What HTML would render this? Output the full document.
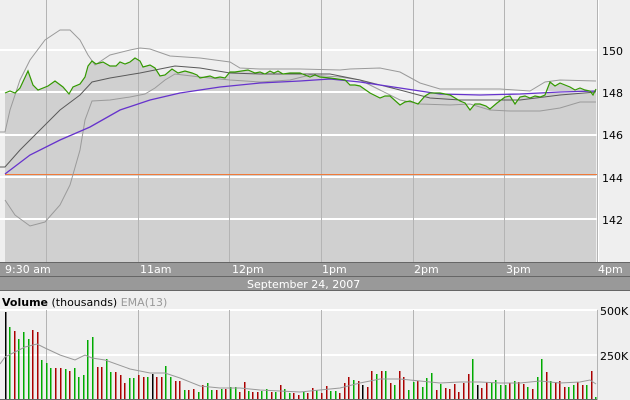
<!DOCTYPE html>
<html><head><meta charset="utf-8"><style>
html,body{margin:0;padding:0;width:630px;height:400px;overflow:hidden;background:#efefef;font-family:"DejaVu Sans","Liberation Sans",sans-serif}
</style></head><body>
<svg id="s" width="630" height="400" xmlns="http://www.w3.org/2000/svg" style="position:absolute;left:0;top:0" shape-rendering="crispEdges">
<rect x="0" y="0" width="630" height="400" fill="#efefef"/>
<!-- price fill -->
<polygon fill="#d0d0d0" points="5,262 5,93 10,91 15,93 20,88 28,71 33,85 38,90 48,86 55,81 63,87 69,94 73,87 80,84 85,77 88,66 92,61 96,64 103,62 110,66 116,66 120,62 125,64 130,62 135,58 140,61 143,67 150,65 155,68 160,76 165,75 172,69 178,73 185,71 192,73 197,75 200,78 205,77 210,76 215,78 220,77 225,78 230,72 235,72 248,70 255,73 260,72 265,74 270,71 274,73 278,71 283,74 290,73 300,73 305,75 310,77 315,75 320,77 330,78 345,80 350,85 355,85 360,86 370,93 380,98 385,96 390,96 400,105 405,102 410,101 418,104 425,96 430,93 440,93 450,95 460,101 465,103 470,110 475,104 480,104 486,106 490,109 497,103 505,97 510,96 515,104 520,97 525,96 530,98 535,96 540,97 545,95 550,82 555,86 560,83 570,87 575,90 580,88 585,90 590,91 593,95 596,89 596,262"/>
<g stroke="#fff" stroke-width="2">
<line x1="0" y1="50" x2="597" y2="50"/><line x1="0" y1="92" x2="597" y2="92"/><line x1="0" y1="135" x2="597" y2="135"/><line x1="0" y1="177" x2="597" y2="177"/><line x1="0" y1="219" x2="597" y2="219"/>
<line x1="0" y1="310" x2="597" y2="310"/><line x1="0" y1="355" x2="597" y2="355"/>
</g>
<g stroke="#b4b4b4" stroke-width="1">
<line x1="46.5" y1="0" x2="46.5" y2="262"/><line x1="138.5" y1="0" x2="138.5" y2="262"/><line x1="229.5" y1="0" x2="229.5" y2="262"/><line x1="321.5" y1="0" x2="321.5" y2="262"/><line x1="413.5" y1="0" x2="413.5" y2="262"/><line x1="504.5" y1="0" x2="504.5" y2="262"/>
<line x1="46.5" y1="310" x2="46.5" y2="400"/><line x1="138.5" y1="310" x2="138.5" y2="400"/><line x1="229.5" y1="310" x2="229.5" y2="400"/><line x1="321.5" y1="310" x2="321.5" y2="400"/><line x1="413.5" y1="310" x2="413.5" y2="400"/><line x1="504.5" y1="310" x2="504.5" y2="400"/>
<line x1="597.5" y1="0" x2="597.5" y2="262"/><line x1="597.5" y1="310" x2="597.5" y2="400"/>
</g>
<line x1="598.5" y1="0" x2="598.5" y2="262" stroke="#fff"/>
<line x1="5" y1="174.5" x2="597" y2="174.5" stroke="#f07a3a" stroke-width="1.3"/>
<g fill="none" shape-rendering="auto" stroke-width="1">
<polyline stroke="#9a9a9a" points="0,132 5,132 10,110 20,80 30,60 45,40 60,30 70,30 80,40 88,55 95,65 110,55 130,50 140,48 150,49 170,56 200,58 230,62 240,68 260,69 300,69 340,70 350,69 380,68 400,72 420,83 440,89 460,89 500,89 530,91 545,82 560,80 596,81"/>
<polyline stroke="#9a9a9a" points="5,200 15,215 30,226 45,222 60,205 70,185 80,150 85,120 92,101 110,100 130,97 145,94 155,88 165,80 175,74 200,77 230,80 260,82 290,80 310,75 340,77 360,80 380,90 400,100 420,104 450,105 470,104 490,110 510,111 540,111 560,108 580,102 596,102"/>
<polyline stroke="#5a5a5a" points="0,167 5,167 20,150 40,130 60,110 80,95 92,82 110,78 140,73 160,69 175,66 200,68 230,73 260,74 300,74 330,74 360,80 400,90 430,98 460,100 490,100 520,100 560,95 596,92"/>
<polyline stroke="#6633cc" stroke-width="1.3" points="5,174 30,155 60,140 90,127 120,110 150,100 180,93 220,87 260,83 300,81 330,79 360,82 400,88 440,94 480,95 520,94 560,92 596,91"/>
<polyline stroke="#339900" stroke-width="1.2" points="5,93 10,91 15,93 20,88 28,71 33,85 38,90 48,86 55,81 63,87 69,94 73,87 80,84 85,77 88,66 92,61 96,64 103,62 110,66 116,66 120,62 125,64 130,62 135,58 140,61 143,67 150,65 155,68 160,76 165,75 172,69 178,73 185,71 192,73 197,75 200,78 205,77 210,76 215,78 220,77 225,78 230,72 235,72 248,70 255,73 260,72 265,74 270,71 274,73 278,71 283,74 290,73 300,73 305,75 310,77 315,75 320,77 330,78 345,80 350,85 355,85 360,86 370,93 380,98 385,96 390,96 400,105 405,102 410,101 418,104 425,96 430,93 440,93 450,95 460,101 465,103 470,110 475,104 480,104 486,106 490,109 497,103 505,97 510,96 515,104 520,97 525,96 530,98 535,96 540,97 545,95 550,82 555,86 560,83 570,87 575,90 580,88 585,90 590,91 593,95 596,89"/>
</g>
<g font-size="11" fill="#000">
<text x="602" y="55">150</text><text x="602" y="97">148</text><text x="602" y="139">146</text><text x="602" y="182">144</text><text x="602" y="224">142</text>
<text x="600" y="315">500K</text><text x="600" y="360">250K</text>
</g>
<!-- axis bars -->
<rect x="0" y="262" width="630" height="29" fill="#999"/>
<g stroke="#666"><line x1="0" y1="262.5" x2="630" y2="262.5"/><line x1="0" y1="276.5" x2="630" y2="276.5"/><line x1="0" y1="290.5" x2="630" y2="290.5"/></g>
<g font-size="11" fill="#fff">
<text x="5" y="273">9:30 am</text><text x="140" y="273">11am</text><text x="232" y="273">12pm</text><text x="322" y="273">1pm</text><text x="414" y="273">2pm</text><text x="506" y="273">3pm</text><text x="598" y="273">4pm</text>
<text x="247" y="288">September 24, 2007</text>
</g>
<text x="2" y="306" font-size="11" fill="#000"><tspan font-weight="bold">Volume</tspan> (thousands) <tspan fill="#999">EMA(13)</tspan></text>
<g id="bars"></g>
<polyline fill="none" stroke="#999" shape-rendering="auto" points="0,364 5,357 15,352 25,347 37,344 45,348 60,355 75,360 85,355 92,358 105,360 130,369 150,373 165,373 180,378 200,386 220,388 240,388 260,390 280,391 300,392 320,390 340,388 360,383 380,379 400,379 420,381 440,383 460,382 480,382 500,383 520,383 540,381 560,383 580,382 590,380 596,384"/>
<line x1="0" y1="399.5" x2="597" y2="399.5" stroke="#666"/>
</svg>
<script>
var d="5k312 9g327 14r331 18g339 23g332 28g339 32r330 37r332 41g360 46g363 50g368 55r368 60r368 65g369 69r371 74g368 78g377 83g375 87g340 92g337 97r367 101r367 106g359 110g372 115r372 120r375 124r383 129g378 133g378 138r375 143r377 147g377 152k374 156r377 161r377 165g366 170g377 175r381 179r381 184g390 188r390 193r389 198g392 202r385 207g383 211g390 216r390 221g389 225r389 230g387 235g387 239r392 244r382 248g391 252r392 257r392 261g391 266g389 271r392 275g392 280r385 284g389 289g393 293r393 298r395 303g392 307r393 312r388 316g390 321r393 326r386 330g391 335g391 339r393 344r383 348r377 353g380 358r381 362k385 367r387 371r371 376g374 381r371 385g371 390r383 394g385 399r371 403r377 408g390 413g382 417r381 422g387 426g378 431g373 436r390 440g384 445r388 449r389 454r384 458r392 463r383 468r374 472g359 477k385 481r388 486r382 491g383 495g380 500g385 505g385 509r383 514g381 518r382 523r384 527g387 532r389 537g377 541g359 546r372 550g381 555r382 559r381 564r387 568g387 573g385 577r382 582r385 586g385 591r371 595g397";
var col={k:"#000",g:"#00aa00",r:"#aa0000"},h="";
d.split(" ").forEach(function(t){var m=t.match(/(\d+)([kgr])(\d+)/);h+='<rect x="'+m[1]+'" y="'+m[3]+'" width="1.3" height="'+(399-m[3])+'" fill="'+col[m[2]]+'"/>';});
document.getElementById("bars").innerHTML=h;
</script>
</body></html>
